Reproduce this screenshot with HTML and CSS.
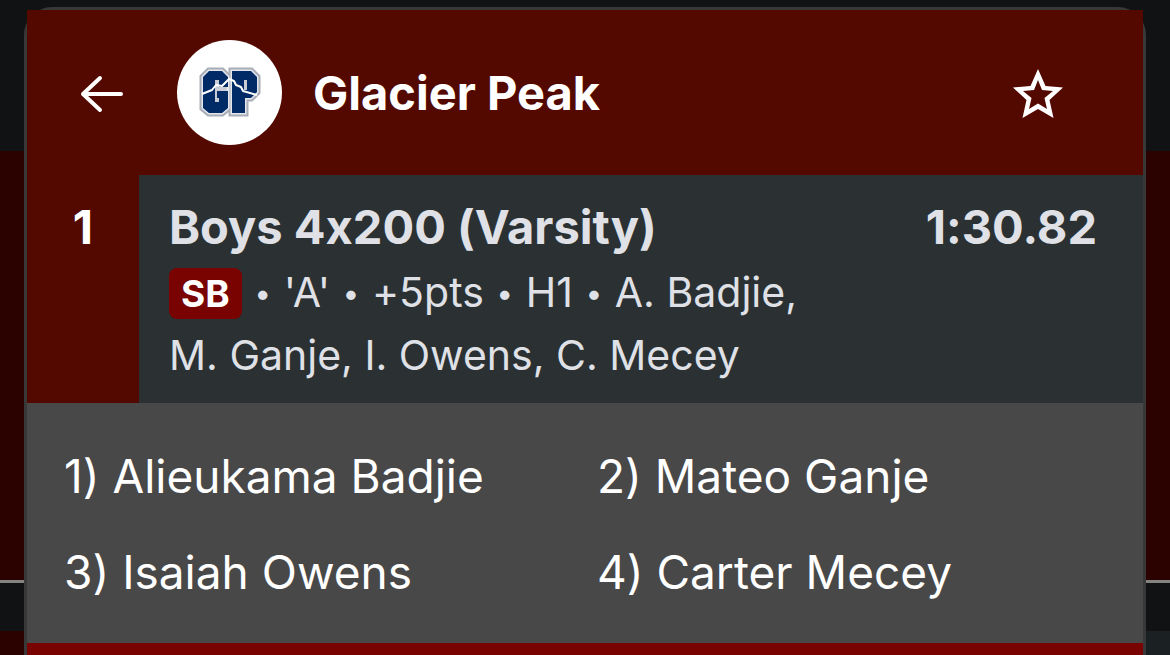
FILE: index.html
```
<!DOCTYPE html>
<html lang="en">
<head>
    <meta charset="utf-8">
    <meta name="viewport" content="width=device-width, initial-scale=1">
    <title>Glacier Peak</title>
    <link rel="stylesheet" href="styles.css">
</head>
<body>
    <div class="backdrop">
        <div class="band band-top"></div>
        <div class="band band-red"></div>
        <div class="band band-dark"></div>
        <div class="band band-bottom"></div>
    </div>

    <main class="modal">
        <header class="team-header">
            <button class="icon-button" type="button" aria-label="Back">
                <svg width="44" height="40" viewBox="0 0 44 40" fill="none" stroke="#fff" stroke-width="4" stroke-linecap="round" stroke-linejoin="round">
                    <path d="M20 5 3 21l17 16M3 21h38"/>
                </svg>
            </button>
            <div class="team-logo">
                <svg width="105" height="105" viewBox="0 0 105 105">
                    <g stroke-linejoin="miter">
                        <g fill="#a9adb8" stroke="#a9adb8" stroke-width="7">
                            <path d="M32 31h13l6 6v31l-6 5H32l-6-5V37z"/>
                            <path d="M55 31h19l6 6v15l-6 6h-6v15H55z"/>
                        </g>
                        <g fill="#c9ccd4" stroke="#e4e6ec" stroke-width="3">
                            <path d="M32 31h13l6 6v31l-6 5H32l-6-5V37z"/>
                            <path d="M55 31h19l6 6v15l-6 6h-6v15H55z"/>
                        </g>
                    </g>
                    <path fill="#002b66" d="M32 31h13l6 6v10h-9v-7h-4v22h4v-4h-2v-7h11v17l-6 5H32l-6-5V37z"/>
                    <path fill="#002b66" fill-rule="evenodd" d="M55 31h19l6 6v15l-6 6h-6v15H55zM67 40v10h3V40z"/>
                    <path fill="none" stroke="#fff" stroke-width="2" stroke-linejoin="round" d="M25 54l10-4 4-5 6 1 7-7 5 2 2 4 5 2 2 4 14 4"/>
                </svg>
            </div>
            <h1 class="team-name">Glacier Peak</h1>
            <button class="icon-button" type="button" aria-label="Favorite">
                <svg width="52" height="52" viewBox="0 0 52 52" fill="#fff" fill-rule="evenodd">
                    <path d="M26 2l7.500 17L51 20.500 37.500 33l4 18L26 42l-15.500 9 4-18L1 20.500 18.500 19zM26 13l-4 10-11 1 8.500 7-2.500 11 9-5.500 9 5.500-2.500-11L41 24l-11-1z"/>
                </svg>
            </button>
        </header>

        <section class="result">
            <div class="place">1</div>
            <div class="result-body">
                <div class="result-top">
                    <h2 class="event">Boys 4x200 (Varsity)</h2>
                    <span class="mark">1:30.82</span>
                </div>
                <p class="details"><span class="badge">SB</span> <span class="dot">•</span> 'A' <span class="dot">•</span> +5pts <span class="dot">•</span> H1 <span class="dot">•</span> A. Badjie,<br>M. Ganje, I. Owens, C. Mecey</p>
            </div>
        </section>

        <section class="athletes">
            <div>1) Alieukama Badjie</div>
            <div>2) Mateo Ganje</div>
            <div>3) Isaiah Owens</div>
            <div>4) Carter Mecey</div>
        </section>

        <div class="next-row"></div>
    </main>
</body>
</html>
```

FILE: styles.css
```
* {
    box-sizing: border-box;
}
body {
    margin: 0;
    height: 100vh;
    overflow: hidden;
    background-color: #101214;
    color: white;
    font-family: Inter, "Liberation Sans", sans-serif;
    /* keep the x in 4x200 a letter */
    font-variant-ligatures: no-contextual;
}
h1, h2, p {
    margin: 0;
}

/* dimmed page behind the modal */
.backdrop {
    position: fixed;
    inset: 0;
    z-index: -1;
    display: flex;
    flex-direction: column;
}
.band-top {
    height: 151px;
}
.band-red {
    height: 432px;
    background-color: #2b0200;
    border-bottom: 3px solid #858282;
}
.band-dark {
    height: 48px;
}
.band-bottom {
    flex: 1;
    background: linear-gradient(90deg, #2b0200 50%, #1b2023 50%);
}

.modal {
    display: flex;
    flex-direction: column;
    min-height: 100vh;
    margin: 7px 24px 0;
    border: 3px solid #383838;
    border-bottom: none;
    border-radius: 28px 28px 0 0;
}

.team-header {
    display: flex;
    align-items: center;
    padding: 30px 79px 30px 53px;
    background-color: #540900;
}
.icon-button {
    display: flex;
    padding: 0;
    border: none;
    background: none;
    cursor: pointer;
}
.team-logo {
    width: 105px;
    height: 105px;
    margin: 0 31px 0 53px;
    border-radius: 50%;
    background-color: white;
}
.team-logo svg {
    display: block;
}
.team-name {
    flex: 1;
    font-size: 47px;
    line-height: 56px;
    font-weight: 700;
}

.result {
    display: flex;
    background-color: #2b3033;
    color: #dfe1e6;
}
.place {
    width: 112px;
    padding-top: 24px;
    background-color: #540900;
    color: white;
    font-size: 47px;
    line-height: 56px;
    font-weight: 700;
    text-align: center;
}
.result-body {
    flex: 1;
    padding: 24px 46px 16px 30px;
}
.result-top {
    display: flex;
    justify-content: space-between;
}
.event, .mark {
    font-size: 47px;
    line-height: 56px;
    font-weight: 700;
}
.details {
    padding-top: 6px;
    font-size: 41px;
    line-height: 63px;
}
.dot {
    margin: 0 1px;
    font-size: 30px;
    line-height: 1;
    vertical-align: 3px;
}
.badge {
    display: inline-block;
    padding: 0 12px;
    border-radius: 8px;
    background-color: #780300;
    color: white;
    font-size: 37px;
    line-height: 51px;
    font-weight: 700;
}

.athletes {
    display: grid;
    grid-template-columns: 1fr 1fr;
    row-gap: 40px;
    padding: 45px 13px 43px 37px;
    background-color: #484848;
    font-size: 46px;
    line-height: 56px;
}
.next-row {
    flex: 1;
    background-color: #780300;
}
```
